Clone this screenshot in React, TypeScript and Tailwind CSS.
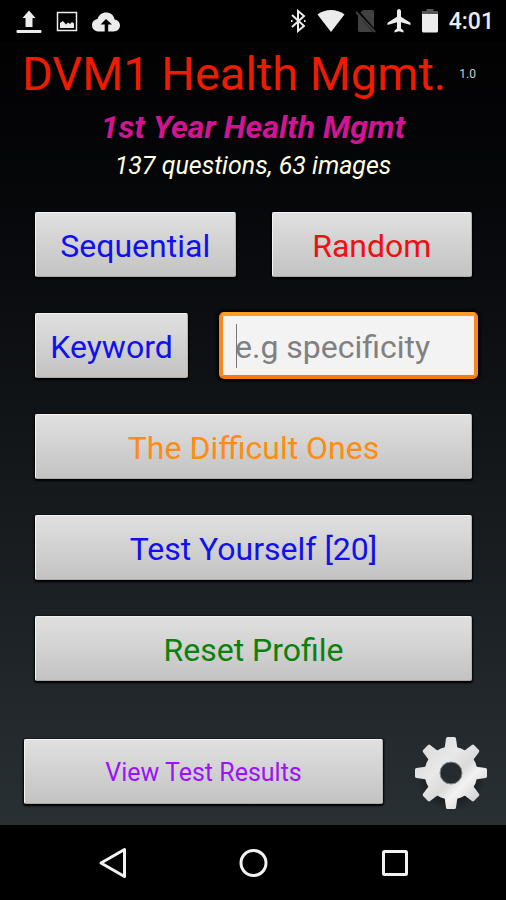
import { ReactNode } from "react";

interface MenuButtonProps {
  children: ReactNode;
  className?: string;
}

function MenuButton({ children, className = "" }: MenuButtonProps) {
  return (
    <button
      type="button"
      className={`h-[65px] rounded-xs border border-t-[#f4f4f4] border-l-[#f4f4f4] border-r-[#b4b4b4] border-b-[#a8a8a8] bg-linear-to-b from-[#e0e0e0] to-[#c3c3c3] pt-0.5 shadow-[0_1px_2px_1px_#000] ${className}`}
    >
      {children}
    </button>
  );
}

function StatusBar() {
  return (
    <div className="flex h-[42px] items-center justify-between bg-black pl-4 pr-3 text-[#ececec]">
      <div className="flex items-center gap-[14px] pt-0.5">
        <svg width="26" height="24" viewBox="0 0 26 24" fill="currentColor">
          <path d="M13 0.500 19.500 8H16.500V17H9.500V8H6.500Z" />
          <rect x="0.500" y="20" width="25" height="3" rx="1" />
        </svg>
        <svg width="22" height="22" viewBox="0 0 22 22" fill="currentColor">
          <rect x="1.500" y="1.500" width="19" height="18" fill="none" stroke="currentColor" strokeWidth="1.500" />
          <path d="M4 17V12L7 10 10 13.500 12 11.500 14 13 16 11 18 12.500V17Z" />
        </svg>
        <svg width="28" height="20" viewBox="0 0 28 20" fill="currentColor">
          <path
            fillRule="evenodd"
            d="M7 19.500C3 19.500 0 17 0 13.200C0 9.800 2.500 7.400 5.500 7C6.800 3 10 0.500 14 0.500C18.500 0.500 21.700 3.200 22.600 7.400C25.700 7.800 28 10.200 28 13.300C28 17 25.300 19.500 21.500 19.500H16.200V12.500H20L14 7 8.500 12.500H12.700V19.500Z"
          />
        </svg>
      </div>
      <div className="flex items-center gap-[11px]">
        <svg width="16" height="24" viewBox="0 0 16 24" fill="none" stroke="currentColor" strokeWidth="2">
          <path d="M2 6 14 17 8 22V2L14 7 2 18" />
          <path d="M1 12H2.500M14 12H15.500" />
        </svg>
        <svg width="28" height="24" viewBox="0 0 28 24" fill="currentColor">
          <path d="M0.500 5.500C8 -0.500 20 -0.500 27.500 5.500L14 23Z" />
        </svg>
        <svg width="20" height="24" viewBox="0 0 20 24">
          <path d="M7 1H16.500Q18 1 18 2.500V21.500Q18 23 16.500 23H3.500Q2 23 2 21.500V6Z" fill="#414141" />
          <path d="M0 1 20 24" stroke="#000" strokeWidth="3.500" />
          <path d="M0 3 19 23" stroke="#414141" strokeWidth="2" />
        </svg>
        <svg width="24" height="24" viewBox="0 0 24 24" fill="currentColor">
          <path d="M23.500 16V13.800L14 7.800V2.200C14 1 13.100 0 12 0S10 1 10 2.200V7.800L0.500 13.800V16L10 13.300V19.600L7.500 21.500V23.500L12 22.300 16.500 23.500V21.500L14 19.600V13.300Z" />
        </svg>
        <svg width="16" height="24" viewBox="0 0 16 24">
          <path d="M4.500 0H11.500V2H16V6H0V2H4.500Z" fill="#555" />
          <path d="M0 5H16V22Q16 23.500 14.500 23.500H1.500Q0 23.500 0 22Z" fill="currentColor" />
        </svg>
        <span className="pt-0.5 text-[23px] leading-6 font-medium">4:01</span>
      </div>
    </div>
  );
}

function GearIcon() {
  const angles = [0, 45, 90, 135, 180, 225, 270, 315];

  return (
    <svg width="80" height="80" viewBox="-40 -40 80 80">
      <defs>
        <linearGradient id="gear-fill" x1="0" y1="0" x2="1" y2="1">
          <stop offset="0.150" stopColor="#dcdcdc" />
          <stop offset="0.400" stopColor="#e8e8e8" />
          <stop offset="0.550" stopColor="#dadada" />
          <stop offset="0.650" stopColor="#f2f2f2" />
          <stop offset="0.850" stopColor="#cecece" />
        </linearGradient>
        <radialGradient id="gear-shadow">
          <stop offset="0.600" stopColor="#000" stopOpacity="0.400" />
          <stop offset="1" stopColor="#000" stopOpacity="0" />
        </radialGradient>
        <mask id="gear-shape" maskUnits="userSpaceOnUse" x="-40" y="-40" width="80" height="80">
          <circle r="26.500" fill="#fff" />
          {angles.map((angle) => (
            <path
              key={angle}
              d="M-6.500 -24 -5 -34.500Q-4.800 -36 -3.500 -36H3.500Q4.800 -36 5 -34.500L6.500 -24Z"
              fill="#fff"
              transform={`rotate(${angle})`}
            />
          ))}
          <circle r="11" fill="#000" />
        </mask>
      </defs>
      <ellipse cy="6" rx="34" ry="33" fill="url(#gear-shadow)" />
      <rect x="-40" y="-40" width="80" height="80" fill="url(#gear-fill)" mask="url(#gear-shape)" />
      <circle r="11" fill="#252c31" stroke="#8b8b8b" strokeWidth="1" />
    </svg>
  );
}

function NavigationBar() {
  return (
    <nav className="flex h-[75px] items-center justify-center gap-[102px] bg-black text-[#f2f2f2]">
      <button type="button" aria-label="Back">
        <svg width="40" height="40" viewBox="0 0 40 40" fill="none" stroke="currentColor" strokeWidth="3" strokeLinejoin="round">
          <path d="M33.500 6.500V33.500L10 20Z" />
        </svg>
      </button>
      <button type="button" aria-label="Home">
        <svg width="40" height="40" viewBox="0 0 40 40" fill="none" stroke="currentColor" strokeWidth="3">
          <circle cx="20.500" cy="20" r="12.500" />
        </svg>
      </button>
      <button type="button" aria-label="Recent apps">
        <svg width="40" height="40" viewBox="0 0 40 40" fill="none" stroke="currentColor" strokeWidth="3">
          <rect x="8.500" y="8.500" width="23" height="23" rx="1" />
        </svg>
      </button>
    </nav>
  );
}

export default function App() {
  return (
    <div className="flex min-h-screen flex-col bg-black font-['Roboto',sans-serif]">
      <StatusBar />

      <main className="flex flex-1 flex-col bg-linear-to-b from-[#020203] to-[#293034]">
        <header className="text-center">
          <div className="flex items-center justify-between pl-[22px] pr-[30px]">
            <h1 className="text-[47px] leading-[64px] whitespace-nowrap text-[#ee1b00]">DVM1 Health Mgmt.</h1>
            <span className="text-xs text-[#cfcfcf]">1.0</span>
          </div>
          <h2 className="text-[32px] leading-[42px] font-bold text-[#d11592] italic">1st Year Health Mgmt</h2>
          <p className="text-[25px] leading-9 text-[#ffffe0] italic">137 questions, 63 images</p>
        </header>

        <div className="flex flex-col gap-9 pt-7 pr-[34px] pl-[35px] text-[32px]">
          <div className="flex gap-9">
            <MenuButton className="flex-1 text-[#1010f0]">Sequential</MenuButton>
            <MenuButton className="flex-1 text-[#f01010]">Random</MenuButton>
          </div>

          <form className="-mr-1.5 flex gap-[31px]" onSubmit={(e) => e.preventDefault()}>
            <MenuButton className="w-[153px] text-[#1010f0]">Keyword</MenuButton>
            <div className="relative -my-px flex-1">
              <input
                type="text"
                aria-label="Keyword"
                placeholder="e.g specificity"
                className="h-[67px] w-full rounded-[5px] border-4 border-t-[#ff9c22] border-r-[#f58a1a] border-b-[#ee7a10] border-l-[#f58a1a] bg-[#f3f3f3] pt-0.5 pl-3 text-[#333] shadow-[0_0_3px_2px_#000] outline-none placeholder:text-[#808080]"
              />
              {/* text cursor */}
              <span className="absolute top-3 left-[17px] h-11 w-px bg-[#777]" />
            </div>
          </form>

          <MenuButton className="text-[#ff8c10]">The Difficult Ones</MenuButton>
          <MenuButton className="text-[#1010f0]">Test Yourself [20]</MenuButton>
          <MenuButton className="text-[#0b800b]">Reset Profile</MenuButton>
        </div>

        <div className="mt-auto flex items-start justify-between pr-[15px] pb-3 pl-6">
          <MenuButton className="mt-[6px] mr-7 flex-1 text-[25px] text-[#9a14f5]">View Test Results</MenuButton>
          <button type="button" aria-label="Settings">
            <GearIcon />
          </button>
        </div>
      </main>

      <NavigationBar />
    </div>
  );
}
